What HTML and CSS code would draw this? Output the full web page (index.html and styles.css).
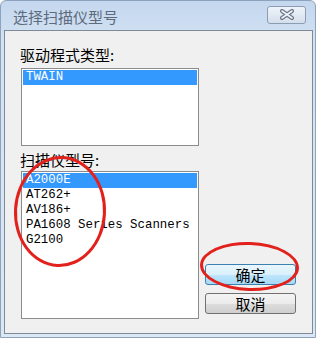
FILE: index.html
```html
<!DOCTYPE html>
<html lang="zh">
<head>
  <meta charset="UTF-8">
  <title>选择扫描仪型号</title>
  <link rel="stylesheet" href="styles.css">
</head>
<body>

  <div class="window">
    <div class="titlebar">
      <span class="title">选择扫描仪型号</span>
      <div class="close">
        <svg width="16" height="11" viewBox="0 0 16 11">
          <path d="M3 2 L13 9 M13 2 L3 9" stroke="#6b7788" stroke-width="4" stroke-linecap="round"/>
          <path d="M3 2 L13 9 M13 2 L3 9" stroke="#eef3f8" stroke-width="1.6" stroke-linecap="round"/>
        </svg>
      </div>
    </div>

    <div class="client">
      <div class="left">
        <label class="lbl">驱动程式类型:</label>
        <div class="listbox small">
          <div class="item selected">TWAIN</div>
        </div>

        <label class="lbl second">扫描仪型号:</label>
        <div class="listbox big">
          <div class="item selected">A2000E</div>
          <div class="item">AT262+</div>
          <div class="item">AV186+</div>
          <div class="item">PA1608 Series Scanners</div>
          <div class="item">G2100</div>
        </div>
      </div>

      <div class="right">
        <button class="btn default">确定</button>
        <button class="btn">取消</button>
      </div>
    </div>

    <!-- red marks drawn over the screenshot -->
    <div class="mark mark-list"></div>
    <div class="mark mark-ok"></div>
  </div>

</body>
</html>
```

FILE: styles.css
```css
body {
  margin: 0;
  background: #fff;
  font-family: "Noto Sans CJK SC", "Noto Sans", sans-serif;
}

.window {
  position: relative;
  width: 316px;
  height: 338px;
  box-sizing: border-box;
  background: linear-gradient(#c3d7ee, #d3e2f3 40px, #dbe7f5);
  border: 1px solid #8ea3bb;
  border-radius: 6px 6px 0 0;
}

.titlebar {
  height: 29px;
  display: flex;
  align-items: center;
  justify-content: space-between;
  padding: 0 9px 0 12px;
}

.title {
  font-size: 15px;
  color: #5d6b7c;
  margin-top: 2px;
}

.close {
  width: 37px;
  height: 16px;
  border: 1px solid #8c9db2;
  border-radius: 3px;
  background: linear-gradient(#eef3f9, #d4dfec);
  display: flex;
  align-items: center;
  justify-content: center;
  margin-top: -2px;
}

.close svg {
  display: block;
}

.client {
  margin: 0 2px 0 3px;
  height: 304px;
  box-sizing: border-box;
  border: 1px solid #7f8a98;
  background: #f0f0f0;
  display: flex;
  padding: 13px 16px 14px 16px;
}

.left {
  width: 178px;
  display: flex;
  flex-direction: column;
}

.lbl {
  display: block;
  font-size: 15px;
  line-height: 20px;
  color: #000;
  margin: 1px 0 3px -1px;
}

.lbl.second {
  margin-top: 4px;
  margin-bottom: 1px;
}

.listbox {
  box-sizing: border-box;
  width: 178px;
  border: 1px solid #8b8c8e;
  background: #fff;
  padding: 1px;
}

.small {
  height: 78px;
}

.big {
  height: 148px;
}

.item {
  height: 15px;
  line-height: 15px;
  font-family: "Liberation Mono", "DejaVu Sans Mono", monospace;
  font-size: 12.4px;
  color: #000;
  padding-left: 3px;
  white-space: nowrap;
}

.item.selected {
  background: #3399ff;
  color: #fff;
}

.right {
  flex: 1;
  display: flex;
  flex-direction: column;
  justify-content: flex-end;
  align-items: flex-end;
  gap: 8px;
  padding-bottom: 5px;
}

.btn {
  width: 91px;
  height: 21px;
  border: 1px solid #707070;
  border-radius: 3px;
  background: linear-gradient(#f4f4f4 0%, #ebebeb 50%, #dddddd 51%, #cfcfcf 100%);
  font-family: "Noto Sans CJK SC", sans-serif;
  font-size: 15px;
  line-height: 17px;
  color: #000;
  padding: 0;
}

.btn.default {
  border-color: #3c7fb1;
  background: linear-gradient(#eaf6fd 0%, #d9f0fc 50%, #bee6fd 51%, #a7d9f5 100%);
}

.mark {
  position: absolute;
  border: 3px solid #e3211c;
  border-radius: 50%;
  box-sizing: border-box;
}

.mark-list {
  left: 13px;
  top: 155px;
  width: 92px;
  height: 111px;
  transform: rotate(3deg);
}

.mark-ok {
  left: 199px;
  top: 241px;
  width: 99px;
  height: 49px;
  transform: rotate(2deg);
}
```
